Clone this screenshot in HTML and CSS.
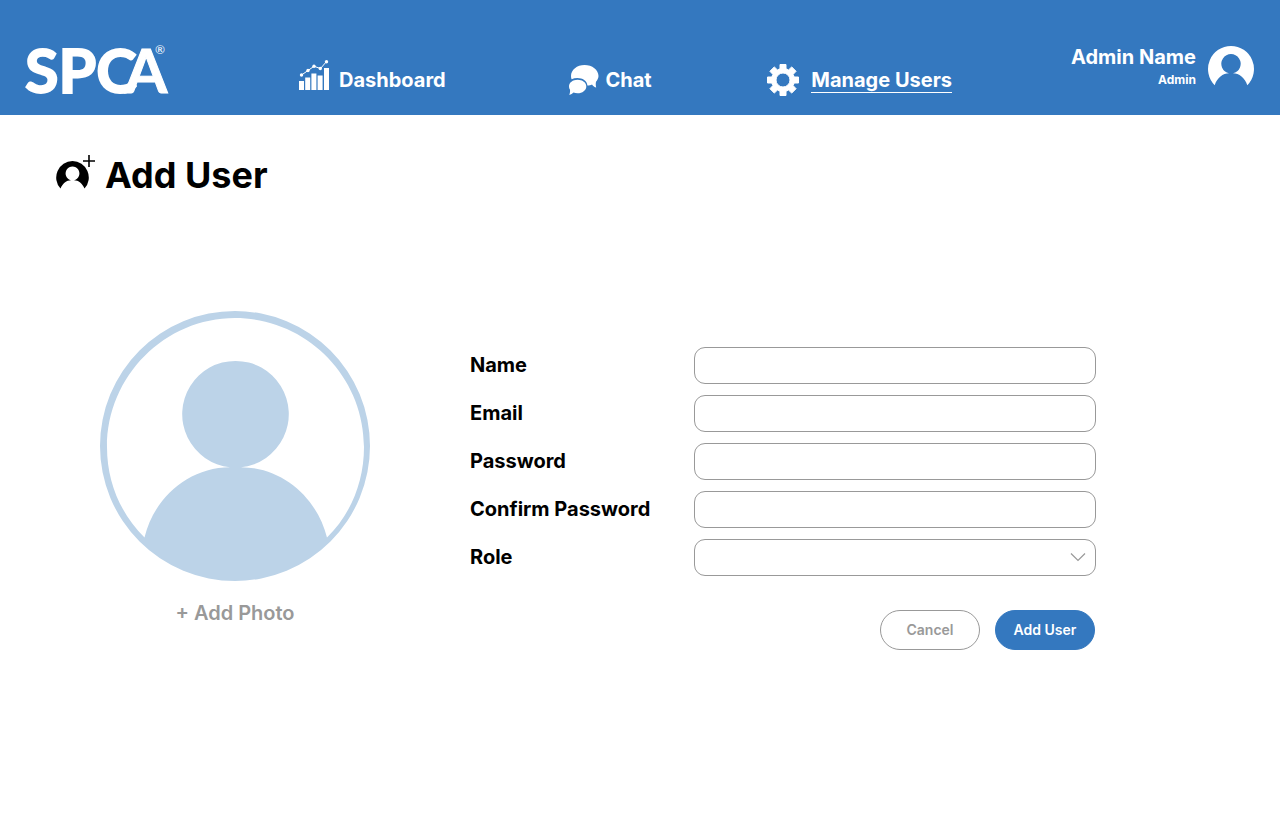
FILE: index.html
```html
<!DOCTYPE html>
<html lang="en">
<head>
<meta charset="utf-8">
<meta name="viewport" content="width=device-width, initial-scale=1">
<title>Add User</title>
<link rel="stylesheet" href="styles.css">
</head>
<body>
<header class="topbar">
  <svg class="logo" viewBox="0 0 144 90" role="img" aria-label="SPCA">
    <text class="logo-letters" x="1" y="68">SPC<tspan class="logo-front" x="101">A</tspan></text>
    <text class="logo-mark" x="131" y="29">®</text>
  </svg>
  <nav class="nav">
    <a class="nav-link" href="#">
      <svg class="icon-chart" viewBox="0 0 30 30" aria-hidden="true">
        <path fill="currentColor" d="M0 21h5v9H0zM6.200 17.500h5V30h-5zM12.400 13.500h5V30h-5zM18.600 15.500h5V30h-5zM25 8h5v22h-5z"/>
        <path fill="none" stroke="currentColor" d="M2.500 15 9 10.500l6-4.200L21.500 8.500l6-7"/>
        <g fill="currentColor"><circle cx="2.500" cy="15" r="1.700"/><circle cx="9" cy="10.500" r="1.700"/><circle cx="15" cy="6.300" r="1.700"/><circle cx="21.300" cy="8.500" r="1.700"/><circle cx="27.500" cy="1.700" r="1.700"/></g>
      </svg>
      <span>Dashboard</span>
    </a>
    <a class="nav-link nav-link-chat" href="#">
      <svg class="icon-chat" viewBox="0 0 30 30" aria-hidden="true">
        <path fill="currentColor" d="M15.500 0C8 0 2 4.800 2 11c0 1.200.200 2.200.600 3.200 1.700-.800 3.700-1.200 5.800-1.200 5.200 0 9.600 2.700 10 7.600 2-.200 3.300-.600 4.600-1.200 1.300 1.700 2.600 2.700 4.200 3.100-.500-2-.600-4-.200-5.800C28.400 15 29.500 13.200 29.500 11 29.500 4.800 23.200 0 15.500 0z"/>
        <path fill="currentColor" d="M8.600 14.800c4.800 0 8.700 2.800 8.700 6.700s-3.900 6.800-8.700 6.800c-1.600 0-2.900-.200-4.100-.700C3.400 28.800 2 29.600.300 30c.700-1.800.900-3.600.700-5.200-.700-1-1-2.100-1-3.300 0-3.900 3.800-6.700 8.600-6.700z"/>
      </svg>
      <span>Chat</span>
    </a>
    <a class="nav-link nav-link-manage" href="#" aria-current="page">
      <svg class="icon-gear" viewBox="0 0 32 32" aria-hidden="true">
        <path fill="currentColor" stroke="currentColor" stroke-linejoin="round" fill-rule="evenodd" d="M13 .5h6v4.300l2.600 1.100 3.100-3 4.400 4.400-3 3.100 1.100 2.600h4.300v6h-4.300l-1.100 2.600 3 3.100-4.400 4.400-3.100-3-2.600 1.100v4.300h-6v-4.300l-2.600-1.100-3.100 3-4.400-4.400 3-3.100L4.800 19H.5v-6h4.300l1.100-2.600-3-3.100 4.400-4.400 3.100 3L13 4.800zM16 9a7 7 0 1 0 0 14 7 7 0 0 0 0-14z"/>
      </svg>
      <span>Manage Users</span>
    </a>
  </nav>
  <div class="account">
    <div class="account-text">
      <span class="account-name">Admin Name</span>
      <span class="account-role">Admin</span>
    </div>
    <svg class="account-avatar" viewBox="0 0 46 40" aria-hidden="true">
      <path fill="currentColor" fill-rule="evenodd" d="M23 0a23 23 0 0 1 16.300 39.200C37 32 31 27.300 25 27.300A9.700 9.700 0 1 0 21 27.300C15 27.300 9 32 6.700 39.200A23 23 0 0 1 23 0z"/>
    </svg>
  </div>
</header>
<main class="page">
  <h1 class="title">
    <svg class="icon-add-user" viewBox="0 0 39 34" aria-hidden="true">
      <path fill="currentColor" d="M16.500 6a16.500 16.500 0 0 1 12 27.600C26.500 28.500 22.500 25.200 18 25.200A6.900 6.900 0 1 0 15 25.200C10.500 25.200 6.500 28.500 4.500 33.600A16.500 16.500 0 0 1 16.500 6z"/>
      <path stroke="currentColor" stroke-width="1.600" d="M27 6h12M33 0v12"/>
    </svg>
    <span>Add User</span>
  </h1>
  <div class="content">
    <button class="photo" type="button">
      <svg class="photo-art" viewBox="0 0 270 270" aria-hidden="true">
        <path fill="currentColor" fill-rule="evenodd" d="M135 0a135 135 0 1 0 0 270 135 135 0 0 0 0-270zM135 7C205 7 264 64 264 136c0 36-14 68-37 90.500C217 187 183 156.500 141 156.200A53.300 53.300 0 1 0 130 156.200C88 156.500 54 187 44.500 226.500 21 203 7 172 7 136 7 65 65 7 135 7z"/>
      </svg>
      <span>+ Add Photo</span>
    </button>
    <form class="form">
      <div class="field"><label for="name">Name</label><input class="control" id="name" type="text"></div>
      <div class="field"><label for="email">Email</label><input class="control" id="email" type="email"></div>
      <div class="field"><label for="password">Password</label><input class="control" id="password" type="password"></div>
      <div class="field"><label for="confirm">Confirm Password</label><input class="control" id="confirm" type="password"></div>
      <div class="field">
        <label for="role">Role</label>
        <div class="select">
          <select class="control" id="role"><option></option></select>
          <svg class="select-arrow" viewBox="0 0 16 10" aria-hidden="true"><path fill="none" stroke="currentColor" stroke-width="1.200" d="m1 1.500 7 7 7-7"/></svg>
        </div>
      </div>
      <div class="actions">
        <button class="button button-cancel" type="button">Cancel</button>
        <button class="button button-add" type="submit">Add User</button>
      </div>
    </form>
  </div>
</main>
</body>
</html>
```
FILE: styles.css
```css
* { box-sizing: border-box; }
body {
  margin: 0;
  background: #fff;
  color: #000;
  font-family: Inter, "Liberation Sans", sans-serif;
}
svg { display: block; flex: none; }
button, input, select { font: inherit; }

.topbar {
  display: flex;
  align-items: flex-start;
  min-height: 115px;
  padding: 0 26px 0 24px;
  background: #3478bf;
  color: #fff;
}
.logo { width: 144px; height: 90px; margin-top: 25px; overflow: visible; }
.logo-letters {
  fill: #fff;
  stroke: #fff;
  stroke-width: 2px;
  font-family: Lato, "Open Sans", sans-serif;
  font-size: 61px;
  font-weight: 700;
}
.logo-front { stroke-width: 1px; }
.logo-mark { fill: #fff; font-family: Lato, sans-serif; font-size: 12px; }
.nav {
  display: flex;
  flex: 1;
  align-items: center;
  justify-content: space-between;
  margin: 60px 119px 0 131px;
  height: 40px;
}
.nav-link {
  display: flex;
  align-items: center;
  gap: 10px;
  color: inherit;
  font-size: 20px;
  font-weight: 700;
  line-height: 24px;
  text-decoration: none;
}
.nav-link-chat { gap: 6px; padding-left: 8px; }
.nav-link-manage { gap: 12px; }
.nav-link-manage span { border-bottom: 1px solid #fff; }
.icon-chart { width: 30px; height: 30px; margin-bottom: 10px; }
.icon-chat { width: 30px; height: 30px; }
.icon-gear { width: 32px; height: 32px; }

.account { display: flex; gap: 12px; padding-top: 45px; }
.account-text { display: flex; flex-direction: column; align-items: flex-end; }
.account-name { font-size: 20px; font-weight: 700; line-height: 24px; }
.account-role { font-size: 12px; font-weight: 700; line-height: 22px; }
.account-avatar { width: 46px; height: 40px; margin-top: 1px; }

.page { padding: 38px 184px 40px 56px; }
.title {
  display: flex;
  align-items: flex-start;
  gap: 10px;
  margin: 0;
  font-size: 36px;
  font-weight: 700;
  line-height: 44px;
}
.icon-add-user { width: 39px; height: 34px; margin-top: 2px; }
.content {
  display: grid;
  grid-template-columns: 270px minmax(0, 1fr);
  gap: 100px;
  align-items: start;
  padding: 114px 0 0 44px;
}
.photo {
  display: flex;
  flex-direction: column;
  align-items: center;
  gap: 20px;
  padding: 0;
  border: 0;
  background: none;
  color: #999;
  font-size: 20px;
  font-weight: 600;
  line-height: 24px;
}
.photo-art { width: 100%; height: auto; color: #bcd3e8; }
.form { display: flex; flex-direction: column; gap: 11px; padding-top: 36px; }
.field {
  display: grid;
  grid-template-columns: 224px minmax(0, 1fr);
  align-items: center;
  font-size: 20px;
  font-weight: 700;
  line-height: 24px;
}
.field label { padding-bottom: 2px; }
.control {
  display: block;
  width: 100%;
  height: 37px;
  padding: 0 10px;
  border: 1px solid #999;
  border-radius: 11px;
  background: #fff;
  font-size: 16px;
  font-weight: 400;
  appearance: none;
}
.select { position: relative; }
.select-arrow {
  position: absolute;
  top: 13px;
  right: 10px;
  width: 16px;
  height: 10px;
  color: #999;
  pointer-events: none;
}
.actions { display: flex; justify-content: flex-end; gap: 15px; padding: 23px 1px 0 0; }
.button {
  width: 100px;
  height: 40px;
  padding: 0 0 2px;
  border: 1px solid #999;
  border-radius: 20px;
  background: #fff;
  color: #999;
  font-size: 14px;
  font-weight: 600;
}
.button-add { border-color: #3478bf; background: #3478bf; color: #fff; }
```
